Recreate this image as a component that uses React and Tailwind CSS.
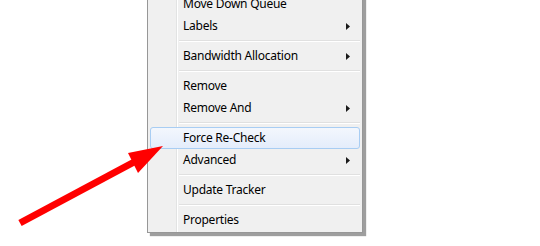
// Windows 7 style context menu with a red pointer arrow
const items = [
  { label: 'Move Down Queue' },
  { label: 'Labels', sub: true },
  { sep: true },
  { label: 'Bandwidth Allocation', sub: true },
  { sep: true },
  { label: 'Remove' },
  { label: 'Remove And', sub: true },
  { sep: true },
  { label: 'Force Re-Check', active: true },
  { label: 'Advanced', sub: true },
  { sep: true },
  { label: 'Update Tracker' },
  { sep: true },
  { label: 'Properties' },
];

function SubArrow() {
  return (
    <svg width="4" height="7" viewBox="0 0 4 7" className="block">
      <path d="M0 0 L4 3.5 L0 7 Z" fill="#1a1a1a" />
    </svg>
  );
}

function MenuItem({ item }) {
  if (item.sep) {
    return (
      <div className="h-[8px] flex flex-col justify-center pl-[29px]">
        <div className="h-px bg-[#e0e0e0]" />
        <div className="h-px bg-white" />
      </div>
    );
  }
  return (
    <div
      className={
        'h-[22px] flex items-center pl-[32px] pr-[9px] rounded-[3px] border ' +
        (item.active
          ? 'border-[#a8cdf3] bg-gradient-to-b from-[#f3f7fd] to-[#e4edfb]'
          : 'border-transparent')
      }
    >
      <span className="flex-1 leading-none tracking-[-0.25px]">{item.label}</span>
      {item.sub && <SubArrow />}
    </div>
  );
}

export default function App() {
  return (
    <div className="relative w-[540px] h-[246px] bg-white overflow-hidden font-['Segoe_UI','Noto_Sans',sans-serif] text-[12px] text-black">
      {/* menu */}
      <div className="ml-[147px] mt-[-10px] w-[216px] relative border border-[#979797] bg-[#f0f0f0] p-[2px] pb-px shadow-[3px_3px_1px_rgba(0,0,0,0.38)]">
        {/* gutter line */}
        <div className="absolute top-0 bottom-0 left-[28px] w-px bg-[#e2e3e3]" />
        <div className="absolute top-0 bottom-0 left-[29px] w-px bg-white" />
        <div className="relative">
          {items.map((item, i) => (
            <MenuItem key={i} item={item} />
          ))}
        </div>
      </div>

      {/* red pointer arrow */}
      <svg className="absolute left-0 top-0" width="540" height="246" viewBox="0 0 540 246">
        <line x1="20" y1="223" x2="136" y2="161" stroke="#ff0000" strokeWidth="7" />
        <polygon points="163,146 128,153 138,173" fill="#ff0000" />
      </svg>
    </div>
  );
}
